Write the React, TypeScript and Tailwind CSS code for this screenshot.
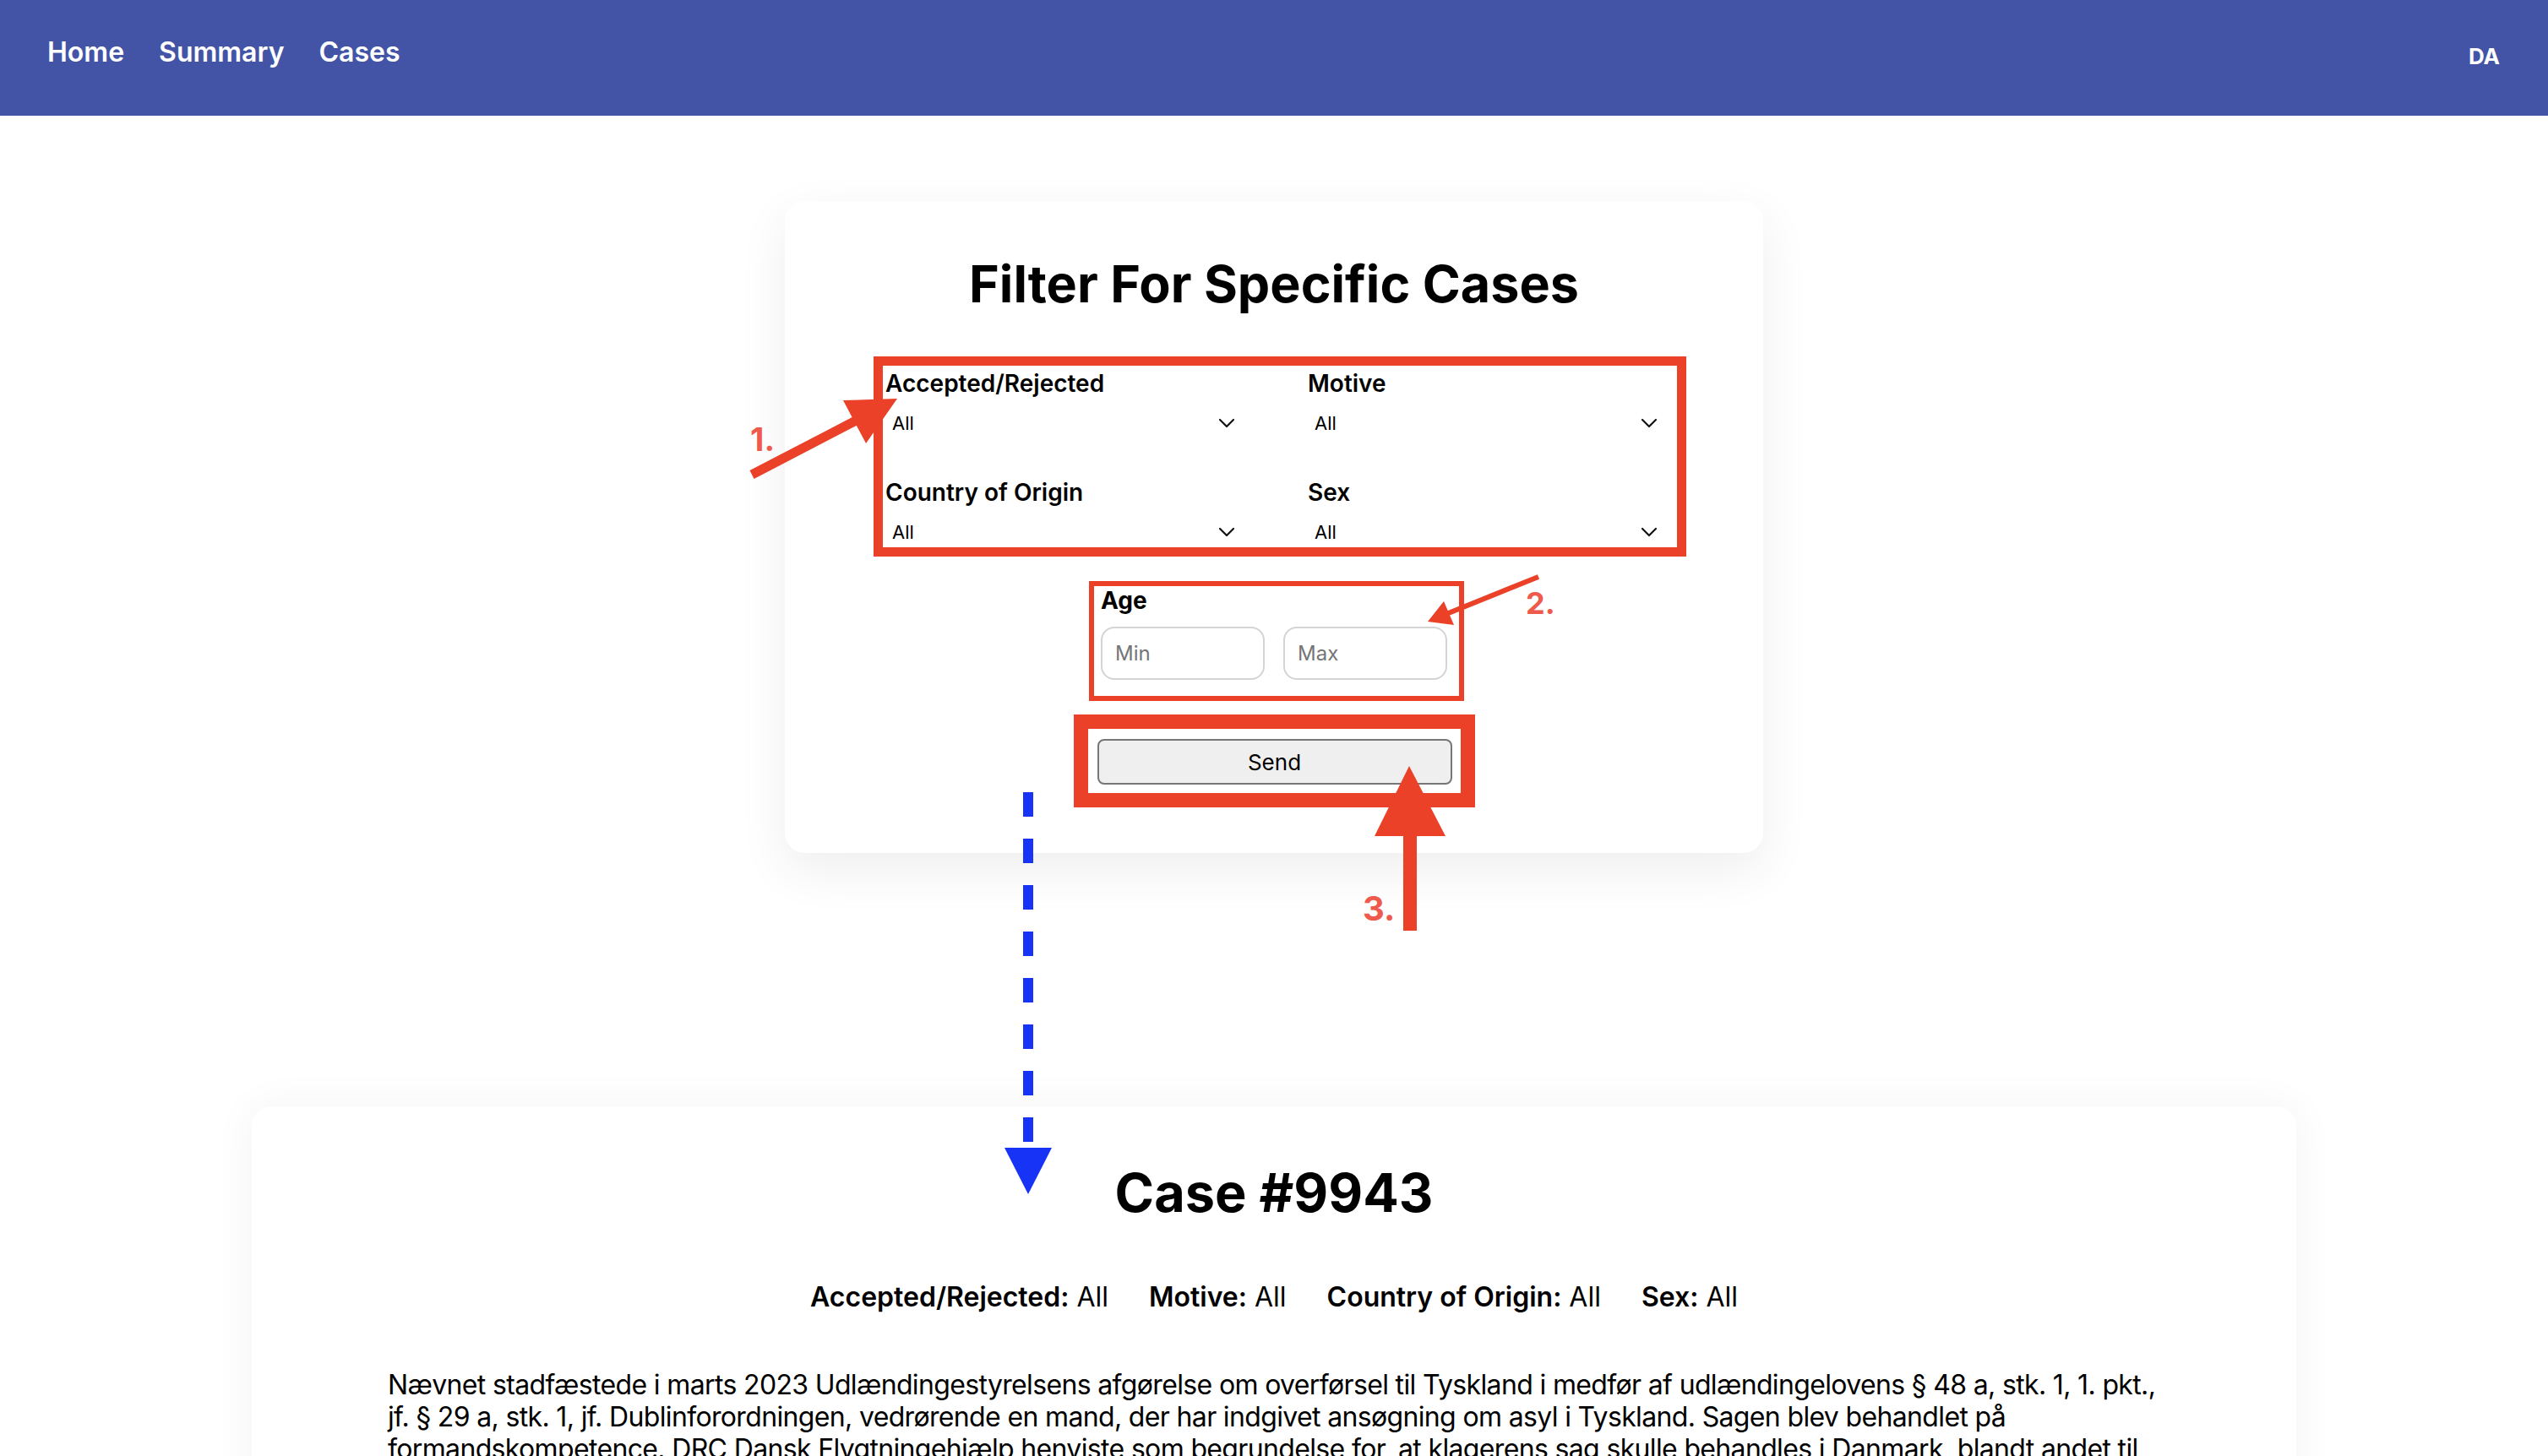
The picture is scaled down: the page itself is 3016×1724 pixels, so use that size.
const fields = ['Accepted/Rejected', 'Motive', 'Country of Origin', 'Sex'];

const caseText =
  'Nævnet stadfæstede i marts 2023 Udlændingestyrelsens afgørelse om overførsel til Tyskland i medfør af udlændingelovens § 48 a, stk. 1, 1. pkt., jf. § 29 a, stk. 1, jf. Dublinforordningen, vedrørende en mand, der har indgivet ansøgning om asyl i Tyskland. Sagen blev behandlet på formandskompetence. DRC Dansk Flygtningehjælp henviste som begrundelse for, at klagerens sag skulle behandles i Danmark, blandt andet til klagerens tilknytning til Danmark og de oplysninger, der var fremkommet om forholdene for asylansøgere i Tyskland.';

function Chevron() {
  return (
    <svg width="20" height="12" viewBox="0 0 20 12" fill="none">
      <path d="M2 2 L10 10 L18 2" stroke="#111" strokeWidth="2.2" strokeLinecap="round" strokeLinejoin="round" />
    </svg>
  );
}

function SelectField({ label }: { label: string }) {
  return (
    <div className="flex flex-col">
      <span className="text-[28px] leading-[34px] font-semibold text-black">{label}</span>
      <div className="mt-[12px] flex h-[36px] items-center justify-between pl-[8px] pr-[8px] text-[22px] text-black">
        <span>All</span>
        <Chevron />
      </div>
    </div>
  );
}

function Annotations() {
  const red = '#ea4128';
  return (
    <svg
      className="pointer-events-none absolute left-0 top-0"
      width={3016}
      height={1724}
      viewBox="0 0 3016 1724"
    >
      {/* 1. */}
      <line x1={890} y1={562} x2={1015} y2={497} stroke={red} strokeWidth={11} />
      <polygon points="1062,472 998,474 1025,525" fill={red} />
      <text x={888} y={534} fill="#ee5b4d" fontSize={38} fontWeight={700} fontFamily="Inter, sans-serif">
        1.
      </text>
      {/* 2. */}
      <line x1={1821} y1={683} x2={1712} y2={727} stroke={red} strokeWidth={6} />
      <polygon points="1690,736 1709,712 1721,740" fill={red} />
      <text x={1806} y={727} fill="#ee5b4d" fontSize={36} fontWeight={700} fontFamily="Inter, sans-serif">
        2.
      </text>
      {/* 3. */}
      <line x1={1669} y1={985} x2={1669} y2={1102} stroke={red} strokeWidth={16} />
      <polygon points="1668,907 1627,990 1711,990" fill={red} />
      <text x={1613} y={1090} fill="#ee5b4d" fontSize={40} fontWeight={700} fontFamily="Inter, sans-serif">
        3.
      </text>
      {/* down arrow */}
      <line
        x1={1217}
        y1={938}
        x2={1217}
        y2={1358}
        stroke="#1633f6"
        strokeWidth={12}
        strokeDasharray="29 26"
      />
      <polygon points="1189,1359 1245,1359 1217,1414" fill="#1633f6" />
    </svg>
  );
}

export default function App() {
  return (
    <div className="relative min-h-screen bg-white font-['Inter',sans-serif] text-black">
      <nav className="flex h-[137px] items-start justify-between bg-[#4354a6] pl-[56px] pr-[57px] text-white">
        <div className="flex gap-[41px] pt-[46px] text-[32px] leading-[32px] font-semibold">
          <span>Home</span>
          <span>Summary</span>
          <span>Cases</span>
        </div>
        <span className="pt-[54px] text-[26px] leading-[26px] font-bold">DA</span>
      </nav>

      <div className="flex flex-col items-center">
        <div className="mt-[101px] flex w-[1158px] flex-col items-center rounded-[24px] bg-white pt-[62px] pb-[54px] shadow-[0_20px_60px_rgba(0,0,0,0.07)]">
          <h1 className="text-[61px] leading-[73px] font-bold">Filter For Specific Cases</h1>

          <div className="mt-[49px] ml-[14px] w-[962px] border-[11px] border-[#ea4128] pt-[4px] pl-[3px]">
            <div className="grid grid-cols-[422px_422px] gap-x-[78px] gap-y-[47px]">
              {fields.map((f) => (
                <SelectField key={f} label={f} />
              ))}
            </div>
          </div>

          <div className="mt-[29px] ml-[6px] w-[444px] border-[6px] border-[#ea4128] pb-[19px] pl-[8px] pr-[15px]">
            <span className="block text-[28px] leading-[34px] font-bold">Age</span>
            <div className="mt-[14px] flex gap-[22px]">
              <input
                placeholder="Min"
                className="h-[63px] w-[194px] rounded-[16px] border-2 border-[#d4d4d4] bg-white px-[15px] text-[24px] outline-none placeholder:text-[#757575]"
              />
              <input
                placeholder="Max"
                className="h-[63px] w-[194px] rounded-[16px] border-2 border-[#d4d4d4] bg-white px-[15px] text-[24px] outline-none placeholder:text-[#757575]"
              />
            </div>
          </div>

          <div className="mt-[16px] w-[475px] border-[17px] border-[#ea4128] pt-[12px] pb-[10px] pl-[11px] pr-[10px]">
            <button className="flex h-[54px] w-[420px] items-center justify-center rounded-[8px] border-2 border-[#767676] bg-[#efefef] text-[26px] text-black">
              Send
            </button>
          </div>
        </div>

        <div className="mt-[300px] w-[2420px] rounded-t-[24px] bg-white px-[161px] pt-[64px] pb-[80px] shadow-[0_0_50px_rgba(0,0,0,0.05)]">
          <h2 className="text-center text-[63px] leading-[77px] font-bold">Case #9943</h2>
          <div className="mt-[66px] flex justify-center gap-[48px] text-[32px] leading-[38px]">
            {fields.map((f) => (
              <span key={f}>
                <b className="font-semibold">{f}:</b> All
              </span>
            ))}
          </div>
          <p className="mt-[66px] text-[32px] leading-[38px] tracking-[-0.65px]">{caseText}</p>
        </div>
      </div>

      <Annotations />
    </div>
  );
}
